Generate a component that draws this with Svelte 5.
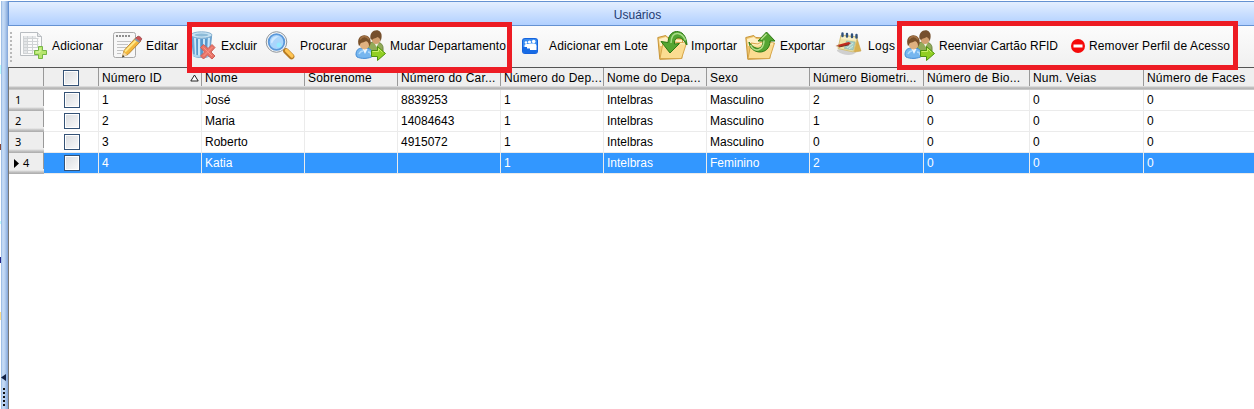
<script>
  const tools = [
    { icon: 'add', label: 'Adicionar', w: 93, gap: 32, tw: 51 },
    { icon: 'edit', label: 'Editar', w: 77, gap: 33, tw: 32 },
    { icon: 'trash', label: 'Excluir', w: 75, gap: 31, tw: 36 },
    { icon: 'search', label: 'Procurar', w: 90, gap: 35, tw: 47 },
    { icon: 'users', label: 'Mudar Departamento', w: 167, gap: 35, tw: 116 },
    { icon: 'batch', label: 'Adicionar em Lote', w: 135, gap: 27, tw: 99 },
    { icon: 'import', label: 'Importar', w: 88, gap: 34, tw: 46 },
    { icon: 'export', label: 'Exportar', w: 90, gap: 35, tw: 45 },
    { icon: 'logs', label: 'Logs', w: 69, gap: 33, tw: 27 },
    { icon: 'users', label: 'Reenviar Cartão RFID', w: 167, gap: 35, tw: 119 },
    { icon: 'remove', label: 'Remover Perfil de Acesso', w: 168, gap: 18, tw: 141 }
  ];
  const columns = ['Número ID', 'Nome', 'Sobrenome', 'Número do Car...', 'Número do Dep...', 'Nome do Depa...', 'Sexo', 'Número Biometri...', 'Número de Bio...', 'Num. Veias', 'Número de Faces'];
  const rows = [
    ['1', 'José', '', '8839253', '1', 'Intelbras', 'Masculino', '2', '0', '0', '0'],
    ['2', 'Maria', '', '14084643', '1', 'Intelbras', 'Masculino', '1', '0', '0', '0'],
    ['3', 'Roberto', '', '4915072', '1', 'Intelbras', 'Masculino', '0', '0', '0', '0'],
    ['4', 'Katia', '', '', '1', 'Intelbras', 'Feminino', '2', '0', '0', '0']
  ];
  const selected = 3;
</script>

{#snippet glyph(name)}
  <svg class="icon" width="32" height="32" viewBox="0 0 32 32">
    {#if name === 'add'}
      <path d="M.5 2.500h17l4 4v19H.5z" fill="#fbfbfb" stroke="#b9bdc1" />
      <path d="M17.500 2.500v4h4" fill="#e3e5e7" stroke="#b9bdc1" />
      <path d="M3 6h13v2H3zM3 9h4v14H3z" fill="#e4e6e8" />
      <path d="M3 8.500h15.500M3 11.500h15.500M3 14.500h15.500M3 17.500h15.500M3 20.500h13M3 23.500h10M3.500 6v17M7.500 6v17M12.500 6v17M17.500 8v10" stroke="#d0d3d5" fill="none" />
      <path d="M18.500 16.500h4v4h4v4h-4v4h-4v-4h-4v-4h4z" fill="#b7e66e" stroke="#76b646" />
      <path d="M20 18v4h-4" fill="none" stroke="#daf7a7" />
    {:else if name === 'edit'}
      <rect x="0.5" y="2.500" width="22" height="25" rx="2" fill="#f7f7f7" stroke="#a9a9a9" />
      <path d="M3 6h2m1 0h2m1 0h2m1 0h2m1 0h2" stroke="#8f8f8f" stroke-width="2" />
      <path d="M4 11.500h14M4 14.500h11M4 17.500h10M4 20.500h6M4 23.500h4" stroke="#c2c2c2" />
      <path d="M9.500 26.500l1.500-6L22.500 8l5 3.500L15 24.500z" fill="#f4b73b" stroke="#a77525" stroke-width=".8" />
      <path d="M12 21.500L24 9.500" stroke="#ffe887" stroke-width="2" />
      <path d="M22.500 8.500l2-2c1-1 5 1.500 4 3l-2 2.500z" fill="#cd5356" stroke="#a05053" />
      <path d="M22 9l4.500 3" stroke="#8797a8" stroke-width="2" />
      <path d="M9.500 27l1.200-5 3.500 3z" fill="#f3d9a9" /><path d="M9 27.500l1-2.500 1.500 1.500z" fill="#333" />
    {:else if name === 'trash'}
      <path d="M1.500 6h20l-2 20c-3 2-12 2-16 0z" fill="#6faada" stroke="#669ac5" />
      <path d="M5 8l1 17M9 9v17M14 9v17M19 8l-1 17" stroke="#c9e7fa" stroke-width="2" />
      <path d="M7 9v17M12 9v18M16 9v16" stroke="#4a8dc1" stroke-width="1.200" />
      <ellipse cx="11.500" cy="5" rx="10.500" ry="3.200" fill="#c6e2f3" stroke="#8ab3d1" />
      <ellipse cx="11.500" cy="5" rx="7" ry="1.500" fill="#8dbbd8" />
      <path d="M3 25c4 2 12 2 16 0" stroke="#aad5ee" stroke-width="2" fill="none" />
      <path d="M10.500 17.500l3-3 4.500 4 4-4 3 3-4 4.500 4 4-3 3-4.500-4-4 4-3-3 4-4z" fill="#e87468" stroke="#cb6159" />
      <path d="M13.500 17.500l8.500 8.500M22.500 17l-9 9" stroke="#fa9586" />
    {:else if name === 'search'}
      <circle cx="11.500" cy="12" r="10.300" fill="#f4f5f6" stroke="#8f969c" />
      <circle cx="11.500" cy="12" r="7.800" fill="#aad5fc" stroke="#5b98da" stroke-width="1.800" />
      <path d="M6 12.500c0-5 4-7 8-6-3 1-5 3-7 7z" fill="#d0e8ff" />
      <circle cx="14" cy="15" r="2.500" fill="#8fefff" opacity=".8" />
      <path d="M19 19l3 3" stroke="#999" stroke-width="3" />
      <path d="M21 21l5.500 5.500" stroke="#b67c24" stroke-width="5.800" stroke-linecap="round" />
      <path d="M21.500 20.500l5.500 5.500" stroke="#ffc554" stroke-width="3.200" stroke-linecap="round" />
    {:else if name === 'users'}
      <path d="M13 17c0-4 3-5 7-5 5 0 8 2 8 6v3H14z" fill="#92aa59" stroke="#6e8841" />
      <path d="M19.500 13l2 4 2-4z" fill="#f1f4e5" />
      <ellipse cx="21" cy="8.500" rx="4.500" ry="5.500" fill="#d2a071" />
      <path d="M15.500 9c-2-11 13-12 11-1l-1 4c0-3-1-4-3-5-2 2-5 1-5 3z" fill="#76502e" />
      <path d="M1 25c0-6 3-7 8-7 6 0 9 2 9 8-4 3-12 3-16 1z" fill="#76b6ef" stroke="#428cd6" />
      <path d="M7.500 19l2.500 5 2.500-5z" fill="#edf7ff" />
      <path d="M4 24c1-2 2-3 4-3M13 22c2 0 3 1 3 3" fill="none" stroke="#b2dbfb" stroke-width="1.500" />
      <ellipse cx="9.500" cy="13.500" rx="5" ry="6" fill="#dfb180" />
      <path d="M4 16C-1 2 18 2 15.500 14L14 17c0-4-1-5-3-6-1 1.500-6 1-6 4z" fill="#795029" />
      <path d="M5 9.500c2-4 7-4 9 0" stroke="#a27245" fill="none" stroke-width="1.500" />
      <path d="M16.500 20.500h6v-4l8 7-8 7v-4h-6z" fill="#91cf23" stroke="#4f930f" />
      <path d="M17.500 21.500h6v-3l4 4" fill="none" stroke="#c9ee65" />
    {:else if name === 'batch'}
      <rect x="0" y="8" width="16" height="16" rx="3" fill="#1663dd" />
      <rect x="1" y="9" width="14" height="14" rx="2" fill="#3a8df0" />
      <path d="M1 17h14v4q0 2-2 2H3q-2 0-2-2z" fill="#176be5" />
      <circle cx="4" cy="12.500" r="1.300" fill="#fff" /><circle cx="7.500" cy="12" r="1.600" fill="#fff" /><circle cx="11.700" cy="11.500" r="1.800" fill="#fff" />
      <path d="M2.500 15.500q0-1.500 1.700-1.500H7l2-.5h3q2.500 0 2.500 3V20H8v-1.500H5V17H2.500z" fill="#fff" />
    {:else if name === 'import' || name === 'export'}
      <path d="M.8 7.500l8-2 2 2 15 1-1 20-22 .8z" fill="#efc66e" stroke="#c79436" />
      <path d="M2 9l7-2 2 2 14 1v6H3z" fill="#fff0c6" />
      <path d="M3 28.500L6 13l7 1 3-2 13.500 1-5 15.500z" fill="#fbdc91" stroke="#d7a64b" />
      <path d="M7 14.500l6 .7 3-1.800 12 .5" stroke="#fff4ca" fill="none" />
      {#if name === 'import'}
        <path d="M30 14.500C29 5 25 1.500 19.500 1.500 14 2 11.500 6 11 12.500l-7-1 9 11.500 9.500-9.500-5 .5c-1-8 8-9 12 1z" fill="#54a532" stroke="#2c7912" />
        <path d="M14 13c0-7 3-10 7-9.500 4 .5 6 3 7.500 7" fill="none" stroke="#a7dc87" stroke-width="1.500" />
      {:else}
        <path d="M4 12c1 13 21 14 21-1h5L21.500 2 13 11h5c0 9-8 10-14 1z" fill="#54a532" stroke="#2c7912" />
        <path d="M5.500 15c4 8 13 6 13.500-4.500M16 9.500l5.500-5.500" fill="none" stroke="#b5df8b" stroke-width="1.500" />
      {/if}
    {:else if name === 'logs'}
      <path d="M2 20c3-2 8-2 11-1l8 3c-2 4-13 4-19-1z" fill="#999" opacity=".4" />
      <path d="M21.500 7l4.500 14-6 1-4-2z" fill="#d8b04f" stroke="#c7a04a" stroke-width=".6" />
      <path d="M6 5l16.500 2-4 15L3 18.500z" fill="#efe3a7" stroke="#d6c27b" />
      <path d="M7 6l14.500 2-.6 2.500L6.200 9z" fill="#f8efc8" />
      <path d="M11.500 11l8.500 1-2 8-8.500-1.500z" fill="#a5cfcb" stroke="#8ab0a5" stroke-width=".6" />
      <path d="M12 18l6-5M14 19l4-3" stroke="#d7e8d5" />
      <path d="M2.500 15l11-3 2.500 1-2 1.800L4 17z" fill="#c12b1c" /><path d="M4 17l10-2.200" stroke="#713329" /><path d="M.5 16l3-1.300L4.500 17z" fill="#b46b3c" />
      <path d="M7.500 3.500v2.500M12 4v2.500M17 4.500V7M21.500 5v2.500" stroke="#31527c" stroke-width="2.400" stroke-linecap="round" />
    {:else}
      <circle cx="7" cy="16" r="7" fill="#f50a0a" /><rect x="2.500" y="14.500" width="9" height="3" fill="#fff" />
    {/if}
  </svg>
{/snippet}

<div class="window">
  <aside>
    <div class="sliver"><i></i><i></i><i></i><i></i><i></i></div>
    <div class="splitter">
      <svg width="6" height="32" viewBox="0 0 6 32"><path d="M5 0v7L0 3.500z" fill="#132143" /><path d="M2 14h2v2H2zM2 18h2v2H2zM2 22h2v2H2zM2 26h2v2H2zM2 30h2v2H2z" fill="#111" /></svg>
    </div>
  </aside>
  <main>
    <header>Usuários</header>
    <nav>
      <span class="grip"></span>
      {#each tools as tool}
        <button style="width:{tool.w}px">
          <span class="slot" style="width:{tool.gap}px">{@render glyph(tool.icon)}</span>
          <svg class="label" width={tool.tw} height="16"><text x="0" y="12" textLength={tool.tw}>{tool.label}</text></svg>
        </button>
      {/each}
    </nav>
    <section class="table">
      <div class="row head">
        <div class="number"></div>
        <div class="check"><span></span></div>
        {#each columns as column, i}
          <div class="cell">{column}{#if i === 0}<svg width="9" height="8" viewBox="0 0 9 8"><path d="M.8 7L4.500 1l3.700 6z" fill="#fff" stroke="#222" /></svg>{/if}</div>
        {/each}
      </div>
      {#each rows as row, index}
        <div class="row" class:selected={index === selected}>
          <div class="number">{#if index === selected}<svg width="6" height="10"><path d="M0 0v9l5-4.500z" /></svg>{/if}<span>{index + 1}</span></div>
          <div class="check"><span></span></div>
          {#each row as value}<div class="cell">{value}</div>{/each}
        </div>
      {/each}
    </section>
    <div class="frame first"></div>
    <div class="frame second"></div>
  </main>
</div>

<style>
  :global(body) { margin: 0; overflow: hidden; background: #fff; }
  .window { display: flex; width: 1254px; height: 409px; overflow: hidden; font: 12px "Liberation Sans", Arial, sans-serif; color: #000; }
  aside { display: flex; width: 8px; flex: none; }
  .sliver { width: 1px; padding-top: 65px; display: flex; flex-direction: column; }
  .sliver i { height: 9px; background: #bff; margin-bottom: 70px; flex: none; }
  .sliver i:nth-child(2) { height: 6px; background: #843; margin-bottom: 71px; }
  .sliver i:nth-child(3) { height: 3px; margin-bottom: 33px; }
  .sliver i:nth-child(4) { height: 6px; background: #228; margin-bottom: 49px; }
  .sliver i:nth-child(5) { height: 8px; background: #fd8; }
  .splitter { width: 7px; margin-top: 1px; background: linear-gradient(90deg, #8fb3df, #c9ddf6 25%, #b8d1f1 55%, #82a5d8); display: flex; align-items: flex-end; }
  .splitter svg { margin-bottom: 3px; }
  main { position: relative; width: 1246px; flex: none; }
  header { box-sizing: border-box; margin-top: 1px; height: 25px; display: flex; align-items: center; justify-content: center; padding-left: 12px; padding-top: 3px; color: #1f3b71; border: solid #6592d2; border-width: 1px 0 1px 1px; background: linear-gradient(#e4efff, #c5dcff 60%, #b1d0ff); }
  nav { height: 41px; display: flex; align-items: center; background: linear-gradient(#fcfcfc, #f0f0f0); }
  .grip { width: 2px; height: 30px; margin: 0 8px 0 2px; background: repeating-linear-gradient(#b9b9b9 0 2px, transparent 2px 4px); }
  button { flex: none; display: flex; align-items: center; height: 40px; padding: 0 0 2px; box-sizing: border-box; border: 0; background: none; font: inherit; color: #000; }
  .slot { flex: none; display: flex; }
  .icon { flex: none; overflow: visible; }
  .label { flex: none; overflow: visible; margin-top: 1px; }
  .table { border-left: 1px solid #777; border-top: 1px solid #555; height: 341px; background: #fff; }
  .row { display: grid; height: 21px; grid-template-columns: 35px 55px 103px 103px 93px 103px 103px 103px 103px 114px 106px 114px 110px; }
  .row > div { box-sizing: border-box; white-space: nowrap; overflow: hidden; }
  .head { height: 22px; background: linear-gradient(#efefef 0 18px, #c5c5c5 19px, #b2b2b2 21px, #ddd); }
  .head > div { height: 18px; border-right: 1px solid #999; }
  .cell { display: flex; align-items: center; justify-content: space-between; padding: 0 2px 0 3px; border-right: 1px solid #ebebeb; border-bottom: 1px solid #ebebeb; }
  .head .cell { border-bottom: 0; padding-top: 1px; letter-spacing: .2px; }
  .row .cell:last-child { border-right: 0; }
  .number { display: flex; align-items: center; gap: 3px; padding-left: 6px; background: linear-gradient(90deg, transparent 34px, #999 34px) 0 0 / 35px 16px no-repeat, linear-gradient(#eee 0 17px, #c3c3c3 19px, #aaa); font: 11px "Noto Sans", sans-serif; }
  .number span { padding-bottom: 2px; }
  .head .number { background: none; }
  .selected .number { padding-left: 5px; }
  .check { display: flex; align-items: center; justify-content: center; border-right: 1px solid #ebebeb; border-bottom: 1px solid #ebebeb; }
  .head .check { border-bottom: 0; }
  .check span { flex: none; box-sizing: border-box; width: 16px; height: 16px; margin-left: 2px; border: 1px solid #345276; box-shadow: inset 0 0 0 1px #fff; background: linear-gradient(135deg, #d9dce0, #fafafa); }
  .head .check span { margin: 2px 0 0; }
  .selected .cell, .selected .check { color: #fff; background: #3297ff; }
  .frame { position: absolute; box-sizing: border-box; border: 5px solid #ed1c24; pointer-events: none; }
  .first { left: 179px; top: 22px; width: 325px; height: 51px; border-bottom-width: 6px; }
  .second { left: 889px; top: 21px; width: 341px; height: 49px; }
</style>
